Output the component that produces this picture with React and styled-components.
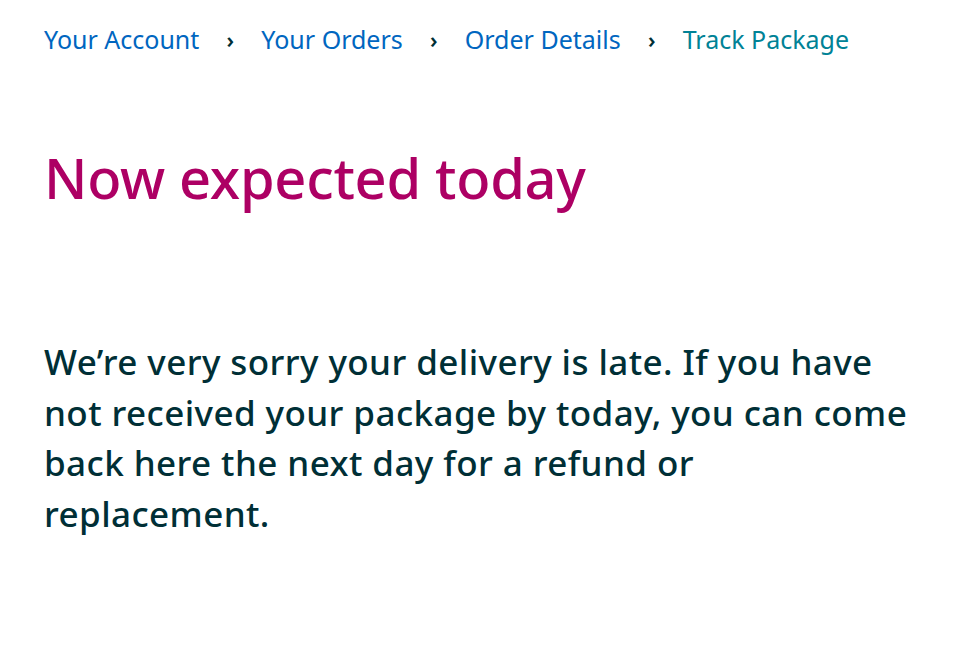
import React from "react";
import styled, { createGlobalStyle } from "styled-components";

const Global = createGlobalStyle`
  html, body { margin: 0; padding: 0; background: #fff; }
  body { font-family: "Noto Sans", "Open Sans", sans-serif; }
`;

const Page = styled.div`
  padding: 19px 44px 0 44px;
  display: flex;
  flex-direction: column;
`;

const Crumbs = styled.nav`
  display: flex;
  align-items: center;
  font-size: 25px;
  line-height: 40px;
`;

const Crumb = styled.a`
  color: ${(p) => (p.$current ? "#008296" : "#0066c0")};
  text-decoration: none;
`;

const Sep = styled.span`
  color: #002f36;
  font-size: 22px;
  font-weight: 600;
  width: 62px;
  text-align: center;
`;

const Heading = styled.h1`
  margin: 83px 0 0 0;
  font-size: 56px;
  font-weight: 500;
  letter-spacing: -0.3px;
  line-height: 70px;
  color: #ad0064;
`;

const Body = styled.p`
  margin: 125px 0 0 0;
  font-size: 35px;
  font-weight: 500;
  letter-spacing: 0.42px;
  line-height: 50.5px;
  color: #002f36;
  max-width: 880px;
`;

export default function App() {
  const items = ["Your Account", "Your Orders", "Order Details", "Track Package"];
  return (
    <>
      <Global />
      <Page>
        <Crumbs>
          {items.map((t, i) => (
            <React.Fragment key={t}>
              {i > 0 && <Sep>›</Sep>}
              <Crumb href="#" $current={i === items.length - 1}>{t}</Crumb>
            </React.Fragment>
          ))}
        </Crumbs>
        <Heading>Now expected today</Heading>
        <Body>
          We’re very sorry your delivery is late. If you have not received your package by today, you can come back here the next day for a refund or replacement.
        </Body>
      </Page>
    </>
  );
}
